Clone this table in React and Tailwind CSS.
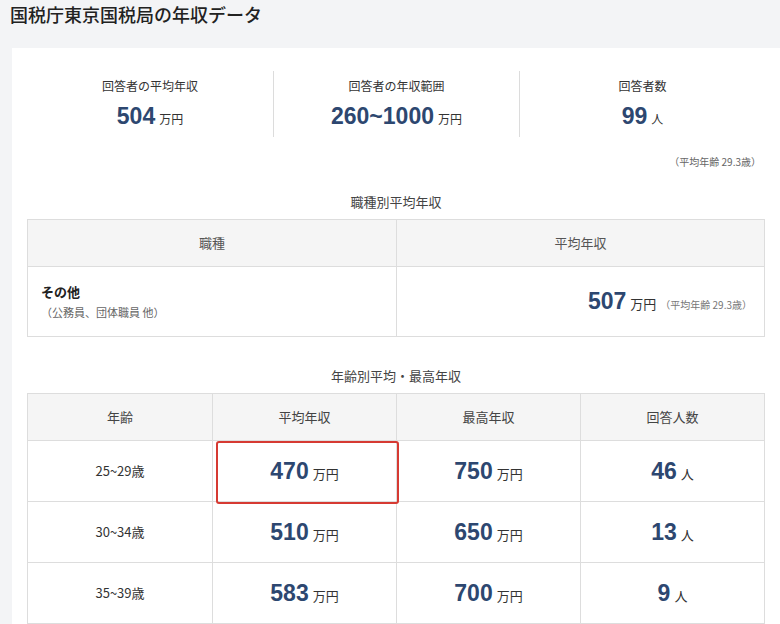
const jp = "font-['Noto_Sans_CJK_JP',sans-serif]";
const num = "font-['Liberation_Sans','Noto_Sans_CJK_JP',sans-serif]";

function Stat({ label, value, unit, border }) {
  return (
    <div className={`flex flex-col items-center ${border ? "border-l border-[#dcdcdc]" : ""} h-[66px] justify-center`}>
      <div className="text-[12px] text-[#333] leading-none">{label}</div>
      <div className="mt-[13px] flex items-baseline gap-[4px]">
        <span className={`${num} text-[23px] font-bold text-[#2d4770] leading-none`}>{value}</span>
        <span className="text-[12px] text-[#333] leading-none">{unit}</span>
      </div>
    </div>
  );
}

function Money({ value, unit = "万円" }) {
  return (
    <span className="flex items-baseline justify-center gap-[4px]">
      <span className={`${num} text-[23px] font-bold text-[#2d4770] leading-none`}>{value}</span>
      <span className="text-[13px] text-[#333] leading-none">{unit}</span>
    </span>
  );
}

const rows = [
  { age: "25~29歳", avg: "470", max: "750", n: "46", mark: true },
  { age: "30~34歳", avg: "510", max: "650", n: "13" },
  { age: "35~39歳", avg: "583", max: "700", n: "9" },
];

export default function App() {
  return (
    <div className={`${jp} bg-[#f3f4f6] w-[780px] h-[624px] overflow-hidden`}>
      <h1 className="pl-[10px] h-[48px] text-[18px] font-medium text-[#222] leading-[28px]">
        国税庁東京国税局の年収データ
      </h1>
      <div className="ml-[12px] bg-white px-[15px] pt-[23px] pb-[20px]">
        <div className="grid grid-cols-3">
          <Stat label="回答者の平均年収" value="504" unit="万円" />
          <Stat label="回答者の年収範囲" value="260~1000" unit="万円" border />
          <Stat label="回答者数" value="99" unit="人" border />
        </div>
        <div className="mt-[20px] pr-[4px] text-right text-[10px] text-[#666] leading-none">
          （平均年齢 29.3歳）
        </div>

        <div className="mt-[28px] text-center text-[13px] text-[#444] leading-none">職種別平均年収</div>
        <div className="mt-[11px] border border-[#ddd]">
          <div className="grid grid-cols-2 h-[47px] bg-[#f5f5f5] border-b border-[#ddd] text-[13px] text-[#555]">
            <div className="flex items-center justify-center">職種</div>
            <div className="flex items-center justify-center border-l border-[#ddd]">平均年収</div>
          </div>
          <div className="grid grid-cols-2 h-[69px]">
            <div className="flex flex-col justify-center pl-[13px]">
              <div className="text-[13px] font-bold text-[#222] leading-none">その他</div>
              <div className="mt-[9px] text-[11px] text-[#666] leading-none">（公務員、団体職員 他）</div>
            </div>
            <div className="flex items-center justify-end pr-[12px] border-l border-[#ddd]">
              <span className="flex items-baseline gap-[4px]">
                <span className={`${num} text-[23px] font-bold text-[#2d4770] leading-none`}>507</span>
                <span className="text-[13px] text-[#333] leading-none">万円</span>
                <span className="text-[10px] text-[#777] leading-none">（平均年齢 29.3歳）</span>
              </span>
            </div>
          </div>
        </div>

        <div className="mt-[32px] text-center text-[13px] text-[#444] leading-none">年齢別平均・最高年収</div>
        <div className="mt-[11px] border border-[#ddd]">
          <div className="grid grid-cols-4 h-[47px] bg-[#f5f5f5] border-b border-[#ddd] text-[13px] text-[#444]">
            <div className="flex items-center justify-center">年齢</div>
            <div className="flex items-center justify-center border-l border-[#ddd]">平均年収</div>
            <div className="flex items-center justify-center border-l border-[#ddd]">最高年収</div>
            <div className="flex items-center justify-center border-l border-[#ddd]">回答人数</div>
          </div>
          {rows.map((r) => (
            <div key={r.age} className="grid grid-cols-4 h-[61px] border-b border-[#ddd]">
              <div className="flex items-center justify-center text-[13px] text-[#333]">{r.age}</div>
              <div className="relative flex items-center justify-center border-l border-[#ddd]">
                <Money value={r.avg} />
                {r.mark && (
                  <div className="absolute left-[3px] -right-[3px] top-0 -bottom-[3px] border-2 border-[#d63a32] rounded-[3px]" />
                )}
              </div>
              <div className="flex items-center justify-center border-l border-[#ddd]">
                <Money value={r.max} />
              </div>
              <div className="flex items-center justify-center border-l border-[#ddd]">
                <Money value={r.n} unit="人" />
              </div>
            </div>
          ))}
        </div>
      </div>
    </div>
  );
}
